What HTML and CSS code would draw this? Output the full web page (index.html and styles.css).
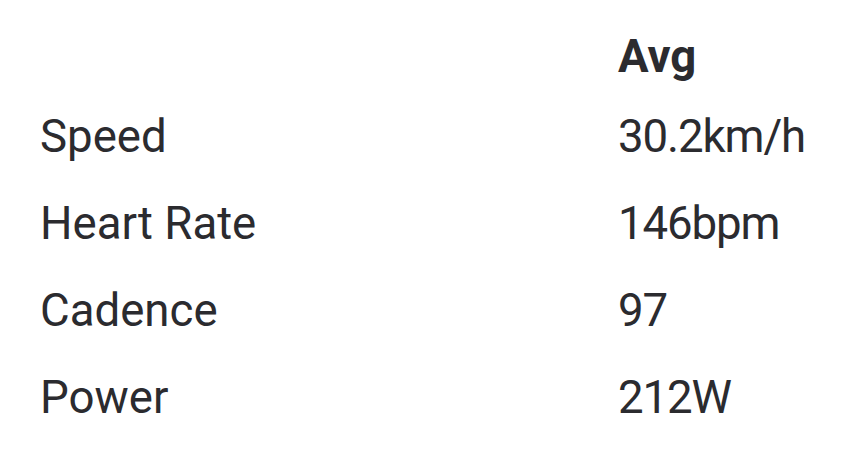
FILE: index.html
```html
<!DOCTYPE html>
<html>
<head>
<meta charset="utf-8">
<link rel="stylesheet" href="styles.css">
</head>
<body>
<div class="stats">
  <div class="cell head"></div>
  <div class="cell head">Avg</div>
  <div class="cell">Speed</div>
  <div class="cell value">30.2km/h</div>
  <div class="cell">Heart Rate</div>
  <div class="cell value">146bpm</div>
  <div class="cell">Cadence</div>
  <div class="cell value">97</div>
  <div class="cell">Power</div>
  <div class="cell value">212W</div>
</div>
</body>
</html>
```
FILE: styles.css
```css
html, body {
  margin: 0;
  padding: 0;
  background: #ffffff;
}
body {
  font-family: Roboto, "Noto Sans", sans-serif;
  font-size: 45.6px;
  color: #2b2b2f;
}
.stats {
  display: grid;
  grid-template-columns: 578px auto;
  padding: 20px 0 0 40px;
}
.cell {
  line-height: 87px;
  white-space: nowrap;
}
.value {
  letter-spacing: -1.1px;
}
.head {
  line-height: 73px;
  font-weight: 700;
}
```
